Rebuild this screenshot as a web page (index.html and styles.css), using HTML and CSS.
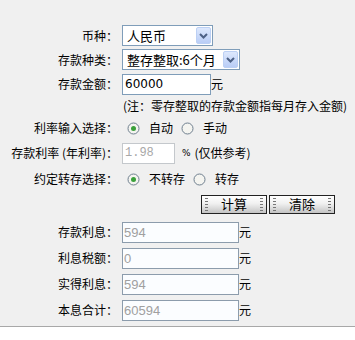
FILE: index.html
```html
<!DOCTYPE html>
<html>
<head>
    <title>存款计算器</title>
    <link rel="stylesheet" href="styles.css">
</head>
<body>
  <div class="calc">
    <div class="row h23">
      <span class="label">币种：</span>
      <div class="field">
        <span class="select w91"><span class="sel-text">人民币</span><span class="arrow"><svg width="9" height="6" viewBox="0 0 9 6"><path d="M1 1 L4.5 4.5 L8 1" fill="none" stroke="#4d6185" stroke-width="2"/></svg></span></span>
      </div>
    </div>
    <div class="row h25">
      <span class="label">存款种类：</span>
      <div class="field">
        <span class="select w118"><span class="sel-text">整存整取:6个月</span><span class="arrow"><svg width="9" height="6" viewBox="0 0 9 6"><path d="M1 1 L4.5 4.5 L8 1" fill="none" stroke="#4d6185" stroke-width="2"/></svg></span></span>
      </div>
    </div>
    <div class="row h24">
      <span class="label">存款金额：</span>
      <div class="field">
        <input type="text" class="txt w89" value="60000"><span>元</span>
      </div>
    </div>
    <div class="row h19">
      <span class="label"></span>
      <div class="field note">(注：零存整取的存款金额指每月存入金额)</div>
    </div>
    <div class="row h26">
      <span class="label">利率输入选择：</span>
      <div class="field">
        <span class="radio"><svg width="13" height="13" viewBox="0 0 13 13"><circle cx="6.5" cy="6.5" r="5.5" fill="#f4f4f0" stroke="#6f7f8f"/><circle cx="6.5" cy="6.5" r="2.5" fill="#3aa03a"/></svg></span><span class="opt">自动</span>
        <span class="radio"><svg width="13" height="13" viewBox="0 0 13 13"><circle cx="6.5" cy="6.5" r="5.5" fill="#f4f4f0" stroke="#6f7f8f"/></svg></span><span class="opt">手动</span>
      </div>
    </div>
    <div class="row h24">
      <span class="label">存款利率 (年利率)：</span>
      <div class="field">
        <input type="text" class="txt rate" value="1.98" disabled><span class="pct">%</span><span>(仅供参考)</span>
      </div>
    </div>
    <div class="row h28">
      <span class="label">约定转存选择：</span>
      <div class="field">
        <span class="radio"><svg width="13" height="13" viewBox="0 0 13 13"><circle cx="6.5" cy="6.5" r="5.5" fill="#f4f4f0" stroke="#6f7f8f"/><circle cx="6.5" cy="6.5" r="2.5" fill="#3aa03a"/></svg></span><span class="opt">不转存</span>
        <span class="radio"><svg width="13" height="13" viewBox="0 0 13 13"><circle cx="6.5" cy="6.5" r="5.5" fill="#f4f4f0" stroke="#6f7f8f"/></svg></span><span class="opt">转存</span>
      </div>
    </div>
    <div class="row h22">
      <span class="label"></span>
      <div class="field buttons">
        <span class="btn">计算</span>
        <span class="btn">清除</span>
      </div>
    </div>
    <div class="results">
      <div class="row h26">
        <span class="label">存款利息：</span>
        <div class="field"><input type="text" class="txt res" value="594" disabled><span>元</span></div>
      </div>
      <div class="row h26">
        <span class="label">利息税额：</span>
        <div class="field"><input type="text" class="txt res" value="0" disabled><span>元</span></div>
      </div>
      <div class="row h26">
        <span class="label">实得利息：</span>
        <div class="field"><input type="text" class="txt res" value="594" disabled><span>元</span></div>
      </div>
      <div class="row h26">
        <span class="label">本息合计：</span>
        <div class="field"><input type="text" class="txt res" value="60594" disabled><span>元</span></div>
      </div>
    </div>
  </div>
</body>
</html>
```

FILE: styles.css
```css
body {
  margin: 0;
  background: #fff;
  font-family: "Noto Sans CJK SC", sans-serif;
  font-size: 12px;
  color: #000;
}

.calc {
  background: #f0f0f0;
  padding-top: 24px;
  padding-bottom: 3px;
  border-bottom: 1px solid #a8a8a8;
}

.row {
  display: grid;
  grid-template-columns: 118px auto;
  column-gap: 4px;
  align-items: center;
}

.h19 { height: 19px; }
.h22 { height: 22px; }
.h23 { height: 23px; }
.h24 { height: 24px; }
.h25 { height: 25px; }
.h26 { height: 26px; }
.h28 { height: 28px; }

.label {
  text-align: right;
  white-space: nowrap;
  line-height: 14px;
}

.field {
  display: flex;
  align-items: center;
  white-space: nowrap;
  line-height: 14px;
}

.select {
  display: flex;
  align-items: center;
  height: 21px;
  box-sizing: border-box;
  border: 1px solid #7f9db9;
  background: #fff;
  padding: 0 1px 0 4px;
}

.w91 { width: 91px; }
.w118 { width: 118px; }

.sel-text {
  font-size: 13px;
}

.arrow {
  margin-left: auto;
  width: 15px;
  height: 17px;
  box-sizing: border-box;
  border: 1px solid #bcd0f4;
  border-radius: 2px;
  background: linear-gradient(#dde8fd, #b9cdf6);
  display: flex;
  align-items: center;
  justify-content: center;
}

.txt {
  margin: 0;
  height: 21px;
  box-sizing: border-box;
  border: 1px solid #7f9db9;
  background: #fff;
  padding: 0 2px;
  font-family: "DejaVu Sans", sans-serif;
  font-size: 12px;
  color: #000;
}

.w89 { width: 89px; }

.rate {
  width: 53px;
  border-color: #c4c8cc;
  font-family: "Liberation Mono", monospace;
  font-size: 12px;
  color: #a8a8a8;
}

.res {
  width: 117px;
  border-color: #8c9cac;
  background: #fbfdff;
  font-family: "Liberation Sans", sans-serif;
  font-size: 13px;
  color: #a0a0a0;
  padding-left: 1px;
}

.note {
  padding-left: 1px;
  font-size: 12px;
}

.radio {
  display: flex;
  width: 13px;
  height: 13px;
  margin-left: 5px;
}

.opt {
  margin-left: 9px;
  margin-right: 3px;
  font-size: 12px;
}

.pct {
  margin-left: 7px;
  margin-right: 4px;
  font-family: "DejaVu Sans", sans-serif;
  font-size: 9px;
}

.buttons {
  padding-left: 79px;
  gap: 2px;
}

.btn {
  position: relative;
  display: flex;
  align-items: center;
  justify-content: center;
  width: 66px;
  height: 19px;
  box-sizing: border-box;
  border: 1px solid #222;
  background: linear-gradient(#ffffff, #f0f0f0 45%, #c4c4c4);
  font-size: 13px;
}

.btn::before,
.btn::after {
  content: "";
  position: absolute;
  top: 2px;
  bottom: 2px;
  width: 3px;
  background: repeating-linear-gradient(#777 0 1px, transparent 1px 3px);
}

.btn::before { left: 3px; }
.btn::after { right: 3px; }

.results {
  padding-top: 4px;
}
```
